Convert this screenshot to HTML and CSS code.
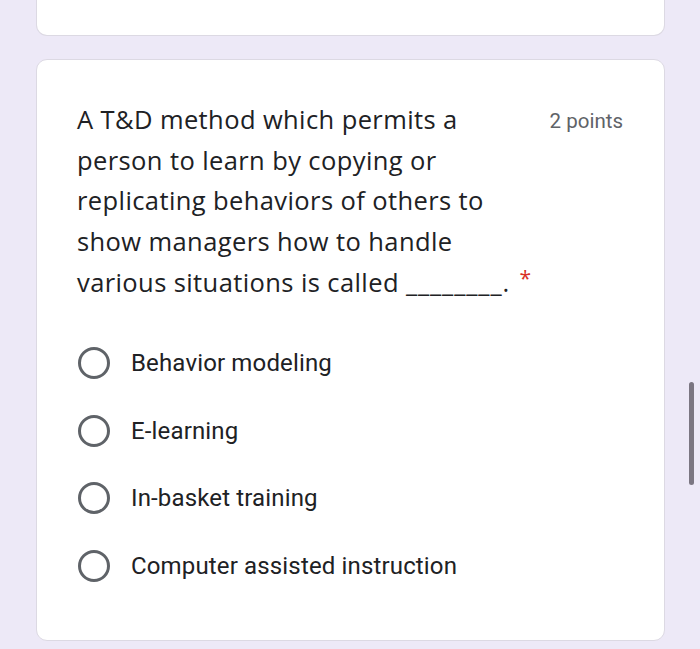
FILE: index.html
```html
<!DOCTYPE html>
<html>
<head>
<meta charset="utf-8">
<link rel="stylesheet" href="styles.css">
</head>
<body>
<div class="page">
  <div class="card card-prev"></div>
  <div class="card card-q">
    <div class="q-head">
      <div class="q-title">A T&amp;D method which permits a<br>person to learn by copying or<br>replicating behaviors of others to<br>show managers how to handle<br>various situations is called <span class="blank">________</span>.&nbsp;<span class="req">*</span></div>
      <div class="q-points">2 points</div>
    </div>
    <div class="options">
      <div class="option"><span class="radio"></span><span class="opt-label">Behavior modeling</span></div>
      <div class="option"><span class="radio"></span><span class="opt-label">E-learning</span></div>
      <div class="option"><span class="radio"></span><span class="opt-label">In-basket training</span></div>
      <div class="option"><span class="radio"></span><span class="opt-label">Computer assisted instruction</span></div>
    </div>
  </div>
</div>
<div class="scrollbar"></div>
</body>
</html>
```

FILE: styles.css
```css
html, body {
  margin: 0;
  padding: 0;
  background: #ede9f7;
}
body {
  width: 700px;
  height: 649px;
  overflow: hidden;
  font-family: Roboto, "Liberation Sans", sans-serif;
  color: #202124;
}
.page {
  display: flex;
  flex-direction: column;
  gap: 23px;
  padding: 0 35px 0 36px;
}
.card {
  background: #ffffff;
  border: 1px solid #dcd9e3;
  border-radius: 11px;
}
.card-prev {
  height: 36px;
  border-top: none;
  border-top-left-radius: 0;
  border-top-right-radius: 0;
  box-sizing: border-box;
}
.card-q {
  height: 582px;
  box-sizing: border-box;
  padding: 39px 41px 0 40px;
}
.q-head {
  display: flex;
  justify-content: space-between;
  align-items: flex-start;
}
.q-title {
  flex: none;
  width: 466px;
  font-family: "Open Sans", Lato, sans-serif;
  font-size: 25.5px;
  letter-spacing: 0.4px;
  line-height: 40.7px;
  color: #202124;
}
.blank {
  letter-spacing: 0.9px;
}
.req {
  color: #d93025;
  font-size: 21px;
  line-height: 20px;
  margin-left: 3px;
  vertical-align: 6px;
}
.q-points {
  font-size: 20.5px;
  color: #5f6368;
  line-height: 24px;
  margin-top: 10px;
}
.options {
  display: flex;
  flex-direction: column;
  margin-top: 27px;
}
.option {
  display: flex;
  align-items: center;
  height: 67.5px;
  gap: 21px;
}
.radio {
  width: 26px;
  height: 26px;
  border: 3px solid #5f6368;
  border-radius: 50%;
  flex: none;
  margin-left: 1px;
}
.opt-label {
  font-size: 24px;
  letter-spacing: 0.15px;
  color: #202124;
}
.scrollbar {
  position: fixed;
  left: 689px;
  top: 382px;
  width: 5px;
  height: 103px;
  border-radius: 3px;
  background: #7b7682;
}
```
